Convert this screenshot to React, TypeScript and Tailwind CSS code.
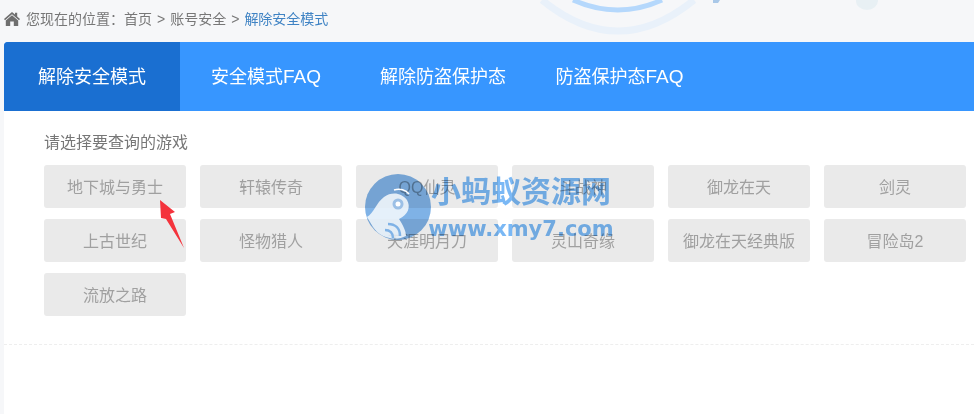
import React from 'react';

const tabs = [
  { label: '解除安全模式', suffix: '', width: 'w-[176px]', active: true },
  { label: '安全模式', suffix: 'FAQ', width: 'w-[172px]', active: false },
  { label: '解除防盗保护态', suffix: '', width: 'w-[182px]', active: false },
  { label: '防盗保护态', suffix: 'FAQ', width: 'w-[171px]', active: false },
];

const games = [
  '地下城与勇士',
  '轩辕传奇',
  'QQ仙灵',
  '斗战神',
  '御龙在天',
  '剑灵',
  '上古世纪',
  '怪物猎人',
  '天涯明月刀',
  '灵山奇缘',
  '御龙在天经典版',
  '冒险岛2',
  '流放之路',
];

function HomeIcon() {
  return (
    <svg viewBox="0 0 16 14" className="w-4 h-[14px] shrink-0 text-[#6f6f6f]" fill="currentColor">
      <path d="M8 0 L11 2.6 V0.8 H13.2 V4.5 L16 7 L15 8.2 L8 2.2 L1 8.2 L0 7 Z" />
      <path d="M8 3.2 L14.2 8.4 V14 H9.8 V9.4 H6.2 V14 H1.8 V8.4 Z" />
    </svg>
  );
}

function HeaderRings() {
  return (
    <svg viewBox="0 0 470 42" className="absolute top-0 left-[504px] w-[470px] h-[42px]" fill="none">
      <path d="M38 0 Q114 62 190 0" stroke="#e9f1fa" strokeWidth="7" />
      <path d="M69 0 Q114 20 158 0" stroke="#b5d8fc" strokeWidth="5" />
      <path d="M209 0 L216 0 L214 3 L209 3 Z" fill="#a9c8e8" />
      <ellipse cx="363" cy="1" rx="11" ry="9" fill="#e8f0f4" />
    </svg>
  );
}

function Watermark() {
  return (
    <div className="absolute top-[173px] left-[364px] flex items-start pointer-events-none">
      <svg viewBox="0 0 68 68" className="w-[68px] h-[68px] shrink-0">
        <circle cx="34" cy="34" r="33" fill="#7fb2e6" className="mix-blend-multiply" />
        <path
          d="M3 44 C10 40 12 30 20 24 C28 18 38 20 43 27 C47 34 44 42 35 46 C39 52 42 58 42 63 C32 68 17 66 9 54 Z"
          fill="#ffffff"
          fillOpacity="0.8"
        />
        <path d="M30 17 C36 15 42 17 45 21" stroke="#ffffff" strokeWidth="1.5" fill="none" />
        <circle cx="34" cy="31" r="5.5" fill="#9cc0e6" />
        <circle cx="34" cy="31" r="2.5" fill="#ffffff" />
        <path d="M24 51 C31 51 36 55 36 63 M21 57 C26 57 29 60 29 65" stroke="#7fb2e6" strokeWidth="2.5" fill="none" />
      </svg>
      <div className="flex flex-col items-center text-[#7ab8f5] font-bold w-[178px] mix-blend-multiply">
        <div className="text-[30px] leading-[38px] whitespace-nowrap">小蚂蚁资源网</div>
        <div className="text-[21px] leading-[28px] mt-[4px] whitespace-nowrap font-['DejaVu_Sans']">www.xmy7.com</div>
      </div>
    </div>
  );
}

function RedArrow() {
  return (
    <svg viewBox="0 0 28 50" className="absolute top-[199px] left-[159px] w-[28px] h-[50px]">
      <path d="M1 1 L16 13 L11 15 L25 49 L7 20 L2 19 Z" fill="#f4333c" />
    </svg>
  );
}

export default function App() {
  return (
    <div className="relative w-[974px] h-[414px] overflow-hidden bg-[#f6f7f9] font-['Liberation_Sans','Noto_Sans_CJK_SC',sans-serif]">
      <HeaderRings />

      {/* Breadcrumb */}
      <div className="relative flex items-center h-[42px] pb-[4px] pl-[4px] text-[14px] text-[#777]">
        <HomeIcon />
        <span className="ml-[6px]">您现在的位置：</span>
        <span>首页</span>
        <span className="mx-[5px]">&gt;</span>
        <span>账号安全</span>
        <span className="mx-[5px]">&gt;</span>
        <span className="text-[#3f83c4]">解除安全模式</span>
      </div>

      <div className="ml-[4px] h-[372px] bg-white rounded-tl-[4px] overflow-hidden">
        {/* Tabs */}
        <div className="flex h-[69px] bg-[#3796ff] text-white text-[18px]">
          {tabs.map((tab) => (
            <div
              key={tab.label}
              className={`flex items-center justify-center pt-[1px] ${tab.width} ${tab.active ? 'bg-[#1a6fd1]' : ''}`}
            >
              {tab.label}
              {tab.suffix && <span className="text-[19px]">{tab.suffix}</span>}
            </div>
          ))}
        </div>

        {/* Game picker */}
        <div className="pt-[20px] pl-[40px] pb-[28px] border-b border-dashed border-[#eeeeee]">
          <div className="text-[16px] leading-[24px] text-[#777] mb-[10px]">请选择要查询的游戏</div>
          <div className="grid grid-cols-[repeat(6,142px)] gap-x-[14px] gap-y-[11px]">
            {games.map((game) => (
              <div
                key={game}
                className="flex items-center justify-center h-[43px] pt-[2px] rounded-[3px] bg-[#eaeaea] text-[16px] text-[#a0a0a0]"
              >
                {game}
              </div>
            ))}
          </div>
        </div>
      </div>

      <RedArrow />
      <Watermark />
    </div>
  );
}
